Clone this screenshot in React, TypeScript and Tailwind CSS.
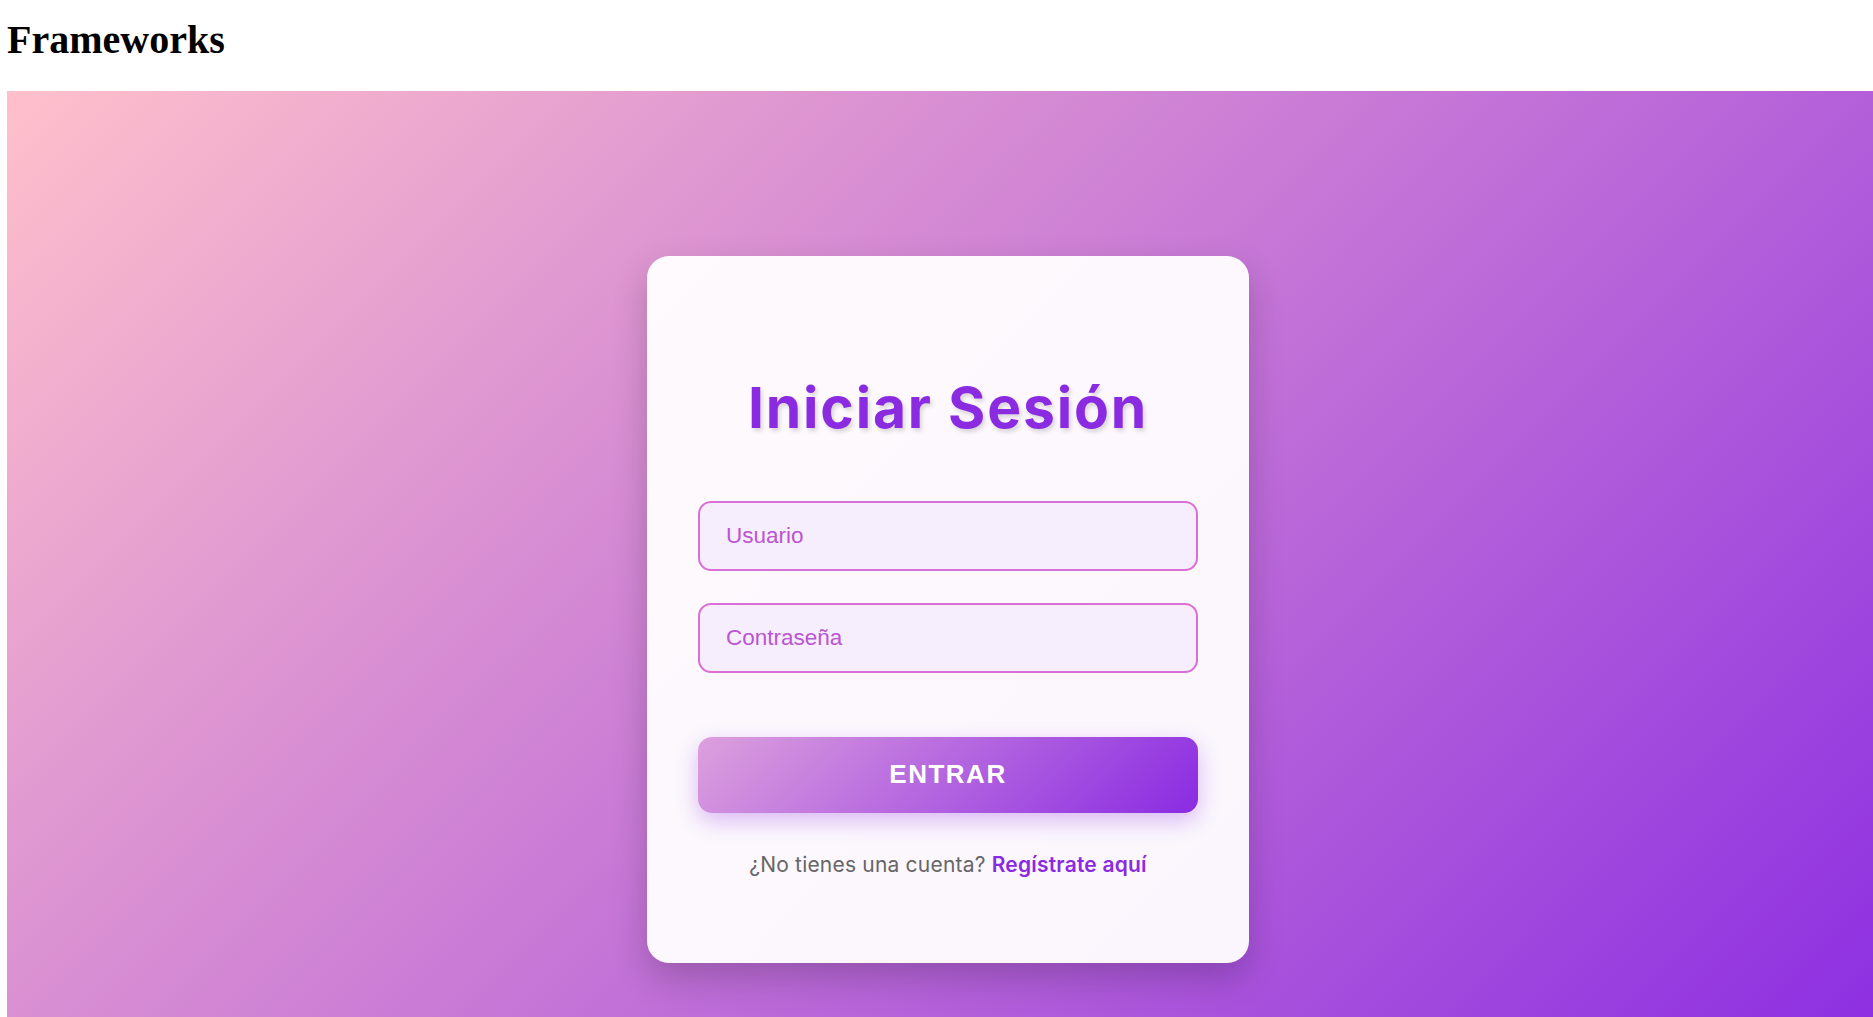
export default function App() {
  return (
    <div className="min-h-screen bg-white pl-[7px] overflow-hidden">
      <h1 className="pt-[17px] pb-[28px] text-[40px] leading-[46px] font-bold text-black [font-family:'Liberation_Serif',serif]">
        Frameworks
      </h1>

      <div className="min-h-screen w-full bg-[linear-gradient(135deg,#ffc0cb,#8a2be2)] flex justify-center pl-4 pt-[165px] pb-10">
        <div className="w-[602px] h-[707px] rounded-[22px] bg-white/95 shadow-[0_15px_35px_rgba(0,0,0,0.2)] px-[51px] pt-[123px] flex flex-col">
          <h2 className="text-center text-[57px] leading-[57px] font-bold tracking-[1.8px] text-[#8a2be2] [text-shadow:2px_3px_4px_rgba(0,0,0,0.15)] [font-family:Inter,sans-serif]">
            Iniciar Sesión
          </h2>

          <div className="mt-[65px] flex flex-col gap-[32px]">
            <input
              type="text"
              placeholder="Usuario"
              className="h-[70px] w-full rounded-[13px] border-2 border-[#da70d6] bg-[#f7eefd] px-[26px] text-[22.5px] text-[#5b2a78] placeholder:text-[#ba55d3] outline-none [font-family:'Liberation_Sans',Arial,sans-serif]"
            />
            <input
              type="password"
              placeholder="Contraseña"
              className="h-[70px] w-full rounded-[13px] border-2 border-[#da70d6] bg-[#f7eefd] px-[26px] text-[22.5px] text-[#5b2a78] placeholder:text-[#ba55d3] outline-none [font-family:'Liberation_Sans',Arial,sans-serif]"
            />
          </div>

          <button className="mt-[64px] h-[76px] w-full rounded-[14px] bg-[linear-gradient(135deg,#dda0dd,#8a2be2)] shadow-[0_8px_22px_rgba(138,43,226,0.3)] text-white text-[26px] font-bold tracking-[1.5px] pb-[2px] [font-family:'Liberation_Sans',Arial,sans-serif]">
            ENTRAR
          </button>

          <p className="mt-[37px] text-center text-[21px] leading-[30px] tracking-[0.2px] text-[#666666] [font-family:Inter,sans-serif]">
            ¿No tienes una cuenta?{" "}
            <a href="#" className="font-semibold text-[#8a2be2]">
              Regístrate aquí
            </a>
          </p>
        </div>
      </div>
    </div>
  );
}
